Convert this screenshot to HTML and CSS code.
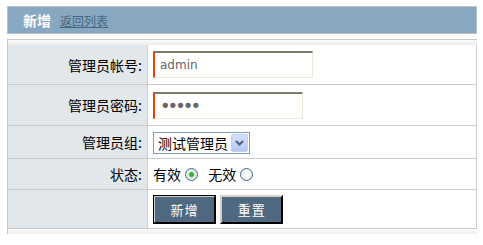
FILE: index.html
```html
<!doctype html>
<html lang="zh-CN">
    <head>
        <meta charset="UTF-8" />
        <title>新增管理员</title>
        <link rel="stylesheet" href="styles.css">
    </head>
    <body>
        <div class="page">
            <div class="title">
                <b>新增</b>
                <a href="#">返回列表</a>
            </div>
            <div class="panel">
                <table class="form">
                    <tr class="row-tall">
                        <td class="label">管理员帐号:</td>
                        <td class="value"><input class="text user" type="text" value="admin"></td>
                    </tr>
                    <tr class="row-tall2">
                        <td class="label">管理员密码:</td>
                        <td class="value"><input class="text pass" type="password" value="12345"></td>
                    </tr>
                    <tr class="row-mid">
                        <td class="label">管理员组:</td>
                        <td class="value">
                            <span class="select-wrap">
                                <select class="select">
                                    <option>测试管理员</option>
                                </select>
                                <span class="select-btn">
                                    <svg width="9" height="6" viewBox="0 0 9 6"><path d="M1 1l3.5 3.5L8 1" fill="none" stroke="#4d6185" stroke-width="2"/></svg>
                                </span>
                            </span>
                        </td>
                    </tr>
                    <tr class="row-short">
                        <td class="label">状态:</td>
                        <td class="value">
                            <label class="opt">有效 <input type="radio" name="state" checked></label>
                            <label class="opt">无效 <input type="radio" name="state"></label>
                        </td>
                    </tr>
                    <tr class="row-btn">
                        <td class="label"></td>
                        <td class="value">
                            <button class="btn default">新增</button>
                            <button class="btn">重置</button>
                        </td>
                    </tr>
                </table>
            </div>
        </div>
    </body>
</html>
```

FILE: styles.css
```css
body {
    margin: 0;
    background: #fff;
    font-family: "Noto Sans CJK SC", "DejaVu Sans", sans-serif;
    font-size: 14px;
    color: #000;
}

.page {
    width: 470px;
    padding: 6px 0 0 7px;
}

.title {
    display: flex;
    align-items: center;
    height: 26px;
    padding-left: 15px;
    border: 1px solid #b8c2cb;
    background-color: #88a7c0;
}

.title b {
    color: #fff;
    font-size: 14px;
}

.title a {
    margin-left: 9px;
    font-size: 12px;
    color: #46667f;
}

.panel {
    margin-top: 5px;
    padding: 5px 0;
    border-top: 1px solid #c8c8c8;
    border-left: 1px solid #c4c4c4;
    background:
        linear-gradient(#fbfbfb, #ececec) top / 100% 5px no-repeat,
        linear-gradient(#fbfbfb, #ececec) bottom / 100% 5px no-repeat;
}

.form {
    width: 469px;
    border-collapse: collapse;
}

.form td {
    padding: 0;
    border-bottom: 1px solid #cccccc;
    border-right: 1px solid #cccccc;
}

.label {
    width: 134px;
    padding-right: 5px !important;
    text-align: right;
    background-color: #e1e7eb;
}

.value {
    padding-left: 5px !important;
    background-color: #fff;
}

.row-tall td { height: 39px; }
.row-tall2 td { height: 40px; }
.row-mid td { height: 32px; }
.row-short td { height: 30px; }
.row-btn td { height: 38px; }

.text {
    display: block;
    box-sizing: border-box;
    height: 27px;
    padding: 0 0 0 5px;
    border-style: solid;
    border-width: 2px 1px 1px 2px;
    border-color: #7f7b6d #ece9d8 #ece9d8 #f03c00;
    background-color: #fffffe;
    font-family: "DejaVu Sans", sans-serif;
    font-size: 12px;
    color: #666;
    outline: none;
}

.user {
    width: 160px;
}

.pass {
    width: 150px;
    font-size: 18px;
    letter-spacing: -3px;
}

.select-wrap {
    position: relative;
    display: inline-block;
    vertical-align: middle;
}

.select {
    display: block;
    width: 97px;
    height: 22px;
    padding: 0 0 0 4px;
    border: 1px solid #7f9db9;
    border-radius: 0;
    background: #fff;
    font-family: inherit;
    font-size: 14px;
    color: #000;
    appearance: none;
    -webkit-appearance: none;
}

.select-btn {
    position: absolute;
    top: 2px;
    right: 2px;
    display: flex;
    align-items: center;
    justify-content: center;
    width: 15px;
    height: 16px;
    border: 1px solid #bccff5;
    border-radius: 2px;
    background: linear-gradient(#d4e0fc, #b4c7f4);
    pointer-events: none;
}

.opt {
    display: inline-flex;
    align-items: center;
    margin-right: 7px;
}

.opt input {
    appearance: none;
    -webkit-appearance: none;
    box-sizing: border-box;
    width: 13px;
    height: 13px;
    margin: 0 0 0 4px;
    border: 1px solid #3f6c97;
    border-radius: 50%;
    background: radial-gradient(circle, #fdfdfb 30%, #d8d8d0 100%);
}

.opt input:checked {
    background: radial-gradient(circle, #2fb52f 0 2px, #a6dba6 2.5px, #f2f2ee 3.5px, #d8d8d0 100%);
}

.btn {
    box-sizing: border-box;
    width: 63px;
    height: 29px;
    margin-right: 1px;
    padding: 0;
    border: 2px solid;
    border-color: #d4d0c8 #000 #000 #d4d0c8;
    background-color: #4f6a80;
    font-family: inherit;
    font-size: 13px;
    color: #fff;
    letter-spacing: 1px;
    vertical-align: middle;
}

.btn.default {
    outline: 1px solid #000;
    outline-offset: -1px;
}
```
